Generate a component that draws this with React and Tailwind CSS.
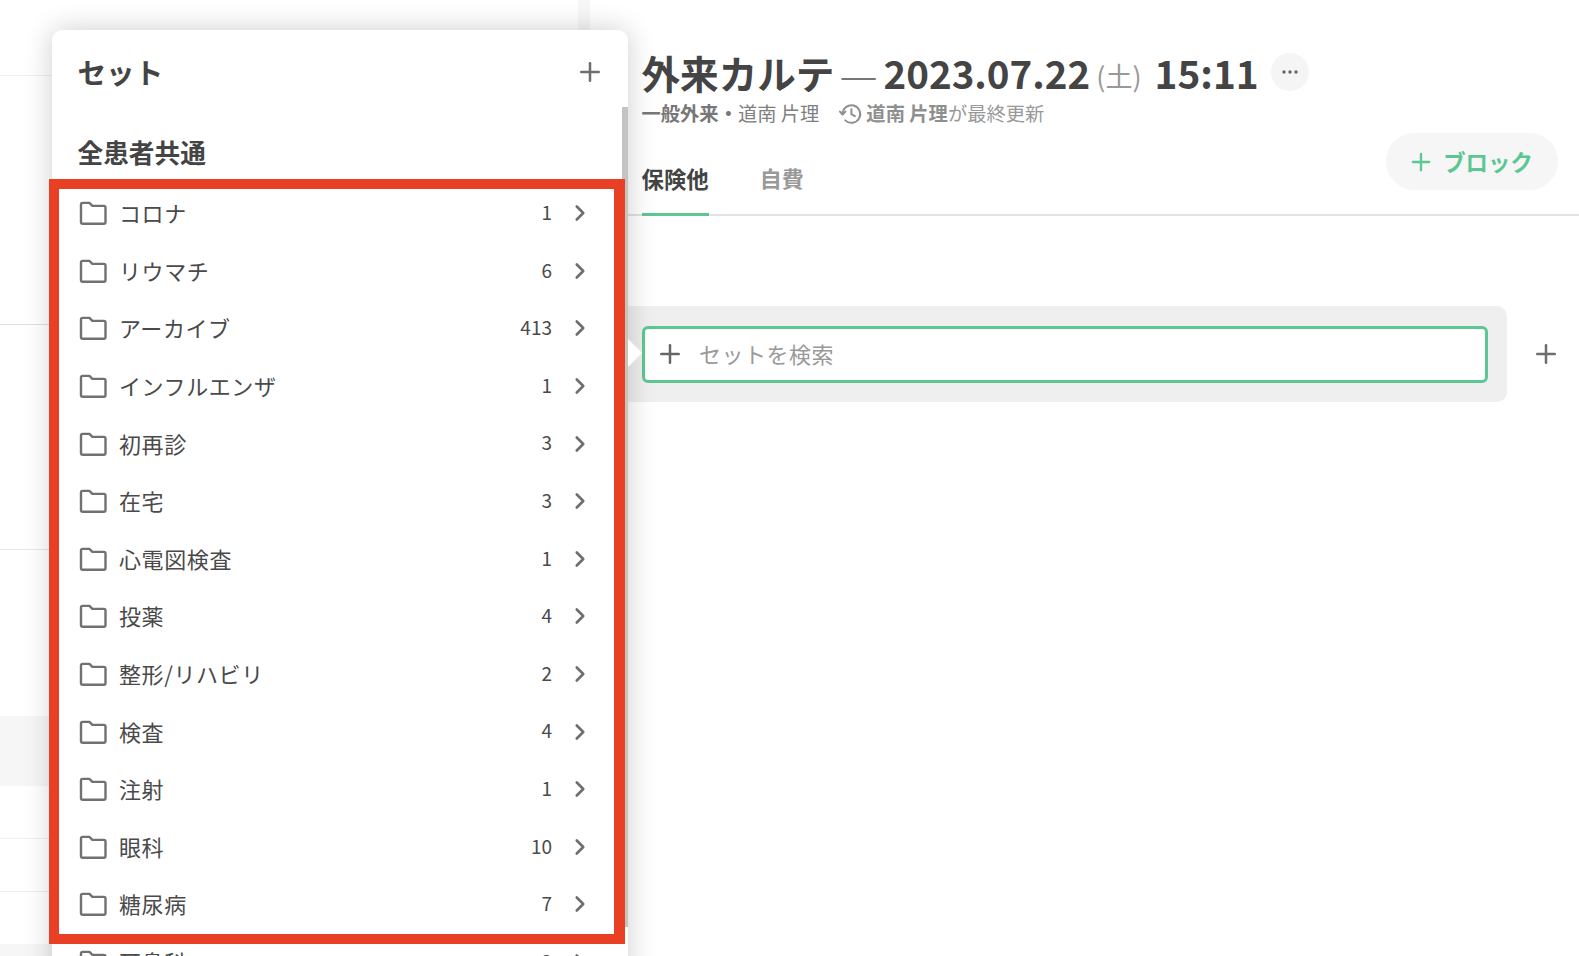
import { Plus, ChevronRight } from "lucide-react";

const FONT = "font-['Noto_Sans_CJK_JP','Noto_Sans',sans-serif]";

const folders = [
  ["コロナ", 1],
  ["リウマチ", 6],
  ["アーカイブ", 413],
  ["インフルエンザ", 1],
  ["初再診", 3],
  ["在宅", 3],
  ["心電図検査", 1],
  ["投薬", 4],
  ["整形/リハビリ", 2],
  ["検査", 4],
  ["注射", 1],
  ["眼科", 10],
  ["糖尿病", 7],
  ["耳鼻科", 2],
];

function FolderIcon() {
  return (
    <svg width="28" height="24" viewBox="0 0 28 24" fill="none" className="shrink-0">
      <path
        d="M2 3.6V21C2 22.1 2.6 22.7 3.7 22.7H24.8C25.9 22.7 26.5 22.1 26.5 21V6.6C26.5 5.5 25.9 4.9 24.8 4.9H13.4L10.4 1.9H3.7C2.6 1.9 2 2.5 2 3.6Z"
        stroke="#717171"
        strokeWidth="2.4"
        strokeLinejoin="round"
      />
    </svg>
  );
}

function FolderRow({ name, count }) {
  return (
    <div className="flex h-[57.6px] shrink-0 items-center pl-[27px] pr-[35px]">
      <FolderIcon />
      <span className="mb-[1px] ml-[12px] flex-1 text-[22px] tracking-[0.6px] text-[#4a4a4a]">{name}</span>
      <span className="mb-[2px] mr-[15px] text-[19px] text-[#4a4a4a]">{count}</span>
      <ChevronRight size={26} strokeWidth={2.4} className="text-[#6e6e6e]" />
    </div>
  );
}

function HistoryIcon() {
  return (
    <svg width="24" height="24" viewBox="0 0 24 24" fill="none" stroke="#8f8f8f" strokeWidth="2" strokeLinecap="round" strokeLinejoin="round">
      <path d="M3.6 12a8.8 8.8 0 1 1 2.7 6.4" />
      <path d="M1 9.6l2.6 2.9 2.9-2.9" />
      <path d="M12.4 7.2v5l3.4 2" />
    </svg>
  );
}

export default function App() {
  return (
    <div className={`relative flex h-[956px] w-[1579px] overflow-hidden bg-white ${FONT}`}>
      {/* left list behind the popover */}
      <div className="w-[578px] shrink-0">
        <div className="h-[76px] border-b border-[#f0f0f0]" />
        <div className="h-[249px] border-b border-[#dedede]" />
        <div className="h-[225px] border-b border-[#e6e6e6]" />
        <div className="h-[166px]" />
        <div className="h-[70px] bg-[#f6f6f6]" />
        <div className="h-[53px] border-b border-[#eeeeee]" />
        <div className="h-[53px] border-b border-[#eeeeee]" />
        <div className="h-[52px]" />
        <div className="h-[12px] bg-[#f6f6f6]" />
      </div>
      <div className="w-[12px] shrink-0 bg-[#f7f7f7]" />

      {/* main */}
      <div className="min-w-0 flex-1">
        <div className="pl-[51.5px] pt-[45px]">
          <div className="flex h-[54px] items-center whitespace-nowrap text-[#444444]">
            <span className="text-[38.6px] font-bold leading-none">外来カルテ</span>
            <span className="ml-[5px] text-[43px] font-light leading-none text-[#777777]">—</span>
            <span className="ml-[6px] text-[38.5px] font-bold leading-none">2023.07.22</span>
            <span className="ml-[6px] mt-[6px] text-[27px] leading-none text-[#999999]">(土)</span>
            <span className="ml-[13px] text-[38.8px] font-bold leading-none">15:11</span>
            <span className="ml-[12px] flex h-[38px] w-[38px] items-center justify-center rounded-full bg-[#f5f5f5] text-[#666666]">
              <svg width="18" height="6" viewBox="0 0 18 6" fill="currentColor">
                <circle cx="3" cy="3" r="1.7" />
                <circle cx="9" cy="3" r="1.7" />
                <circle cx="15" cy="3" r="1.7" />
              </svg>
            </span>
          </div>
          <div className="mt-[1px] flex h-[28px] items-center whitespace-nowrap text-[19.3px] leading-none">
            <span className="font-bold text-[#777777]">一般外来</span>
            <span className="font-bold text-[#777777]">・</span>
            <span className="text-[#808080]">道南 片理</span>
            <span className="ml-[20px] mr-[3px] flex"><HistoryIcon /></span>
            <span className="font-bold text-[#8f8f8f]">道南 片理</span>
            <span className="text-[#999999]">が最終更新</span>
          </div>
        </div>

        <div className="mt-[4px] flex h-[84px] border-b-2 border-[#e2e2e2] pl-[51.5px]">
          <div className="mb-[-2px] flex h-[84px] flex-col justify-end border-b-[3px] border-[#5cc793]">
            <span className="mb-[24px] text-[22.4px] font-bold leading-none text-[#444444]">保険他</span>
          </div>
          <div className="ml-[51px] flex h-[84px] flex-col justify-end">
            <span className="mb-[28px] text-[22px] font-bold leading-none text-[#999999]">自費</span>
          </div>
          <div className="ml-auto mr-[21px] mt-[1px] flex h-[57px] w-[172px] items-center justify-center rounded-full bg-[#f6f6f6] pr-[4px] text-[#5cc793]">
            <Plus size={28} strokeWidth={2} />
            <span className="ml-[8px] text-[22.4px] font-bold leading-none">ブロック</span>
          </div>
        </div>

        <div className="mt-[90px] flex items-center">
          <div className="flex h-[96px] w-[917px] items-center justify-end rounded-r-[10px] bg-[#efefef] pr-[19px]">
            <div className="flex h-[57px] w-[846px] items-center rounded-[6px] border-[3px] border-[#5cc793] bg-white pl-[10px]">
              <Plus size={30} strokeWidth={2} className="text-[#666666]" />
              <span className="mb-[1px] ml-[14px] text-[22px] tracking-[0.5px] text-[#999999]">セットを検索</span>
            </div>
          </div>
          <Plus size={30} strokeWidth={2} className="ml-[24px] text-[#6e6e6e]" />
        </div>
      </div>

      {/* popover */}
      <div className="absolute left-[52px] top-[30px] flex h-[960px] w-[576px] flex-col overflow-hidden rounded-t-[10px] bg-white shadow-[0_0_28px_rgba(0,0,0,0.2)]">
        <div className="flex h-[84px] shrink-0 items-center justify-between pl-[25.5px] pr-[23px]">
          <span className="text-[28.6px] font-bold leading-none text-[#444444]">セット</span>
          <Plus size={30} strokeWidth={2} className="text-[#6e6e6e]" />
        </div>
        <div className="flex h-[70.5px] shrink-0 items-end pb-[20px] pl-[25.5px]">
          <span className="text-[25.7px] font-bold leading-none text-[#444444]">全患者共通</span>
        </div>
        <div className="flex flex-col">
          {folders.map(([name, count]) => (
            <FolderRow key={name} name={name} count={count} />
          ))}
        </div>
        <div className="absolute right-0 top-[77px] h-[820px] w-[6px] bg-[#c4c4c4]" />
      </div>

      {/* pointer of the popover */}
      <div className="absolute left-[628px] top-[339px] h-0 w-0 border-y-[14px] border-l-[14px] border-y-transparent border-l-white" />

      {/* red annotation */}
      <div className="pointer-events-none absolute left-[49px] top-[179px] h-[765px] w-[576px] border-[10px] border-r-[11px] border-[#e94025]" />
    </div>
  );
}
